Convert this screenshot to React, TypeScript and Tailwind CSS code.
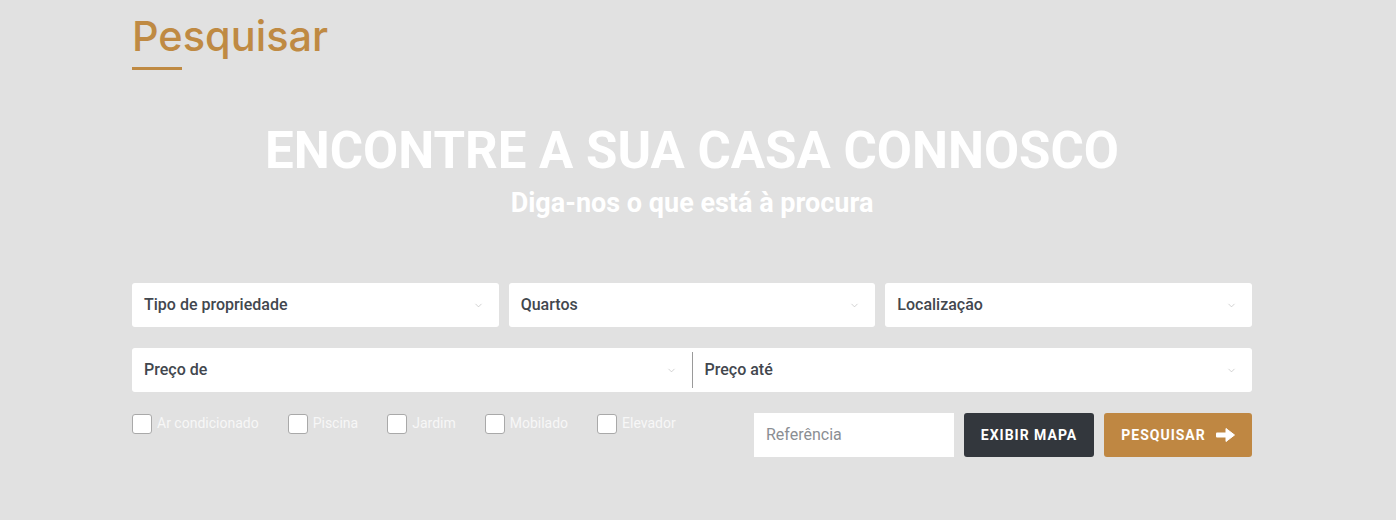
import { ChevronDown } from "lucide-react";

const roboto = { fontFamily: "Roboto, 'Liberation Sans', sans-serif" };

function SelectBox({ label, className = "" }: { label: string; className?: string }) {
  return (
    <div className={`flex h-[44px] items-center justify-between px-3 ${className}`}>
      <span className="text-[16px] font-medium text-[#42474e]">{label}</span>
      <ChevronDown className="mr-[3px] h-[11px] w-[11px] text-[#bdbdbd]" strokeWidth={1.5} />
    </div>
  );
}

function Check({ label }: { label: string }) {
  return (
    <label className="flex items-center gap-[5px]">
      <span className="h-[20px] w-[20px] rounded-[3px] border border-[#a9a9a9] bg-white" />
      <span className="text-[14px] text-[#f7f7f7]">{label}</span>
    </label>
  );
}

function BlockArrow() {
  return (
    <svg width="19" height="14" viewBox="0 0 19 14" fill="currentColor">
      <rect x="0" y="4.5" width="11" height="5" rx="1" />
      <path d="M10 0.5 L18.5 7 L10 13.5 Z" strokeLinejoin="round" stroke="currentColor" strokeWidth="1" />
    </svg>
  );
}

export default function App() {
  return (
    <div className="min-h-[520px] w-full bg-[#e1e1e1]" style={roboto}>
      <div className="ml-[132px] w-[1120px] pt-[8px]">
        <h2
          className="text-[41.5px] font-medium leading-[56px] text-[#bf8a43]"
          style={{ fontFamily: "Inter, 'Open Sans', sans-serif" }}
        >
          Pesquisar
        </h2>
        <div className="mt-[3px] h-[3px] w-[50px] bg-[#bf8a43]" />

        <div className="mt-[50px] text-center text-white">
          <h1 className="text-[51px] font-bold leading-[62px]">ENCONTRE A SUA CASA CONNOSCO</h1>
          <p className="mt-[5px] text-[27px] font-bold leading-[33px]">Diga-nos o que está à procura</p>
        </div>

        <div className="mt-[63px] grid grid-cols-3 gap-[10px]">
          <SelectBox label="Tipo de propriedade" className="rounded-[3px] bg-white" />
          <SelectBox label="Quartos" className="rounded-[3px] bg-white" />
          <SelectBox label="Localização" className="rounded-[3px] bg-white" />
        </div>

        <div className="mt-[21px] flex rounded-[3px] bg-white">
          <SelectBox label="Preço de" className="flex-1" />
          <div className="my-[4px] w-px bg-[#9a9a9a]" />
          <SelectBox label="Preço até" className="flex-1" />
        </div>

        <div className="mt-[21px] flex items-start justify-between">
          <div className="flex items-center gap-[29px]">
            <Check label="Ar condicionado" />
            <Check label="Piscina" />
            <Check label="Jardim" />
            <Check label="Mobilado" />
            <Check label="Elevador" />
          </div>
          <div className="flex gap-[10px]">
            <div className="flex h-[44px] w-[200px] items-center bg-white px-3 text-[16px] text-[#8b8e93]">
              Referência
            </div>
            <button className="h-[44px] w-[130px] rounded-[3px] bg-[#33373d] text-[14px] font-bold tracking-[1px] text-white">
              EXIBIR MAPA
            </button>
            <button className="flex h-[44px] w-[148px] items-center justify-center gap-[10px] rounded-[3px] bg-[#bf8742] text-[14px] font-bold tracking-[1px] text-white">
              PESQUISAR
              <BlockArrow />
            </button>
          </div>
        </div>
      </div>
    </div>
  );
}
